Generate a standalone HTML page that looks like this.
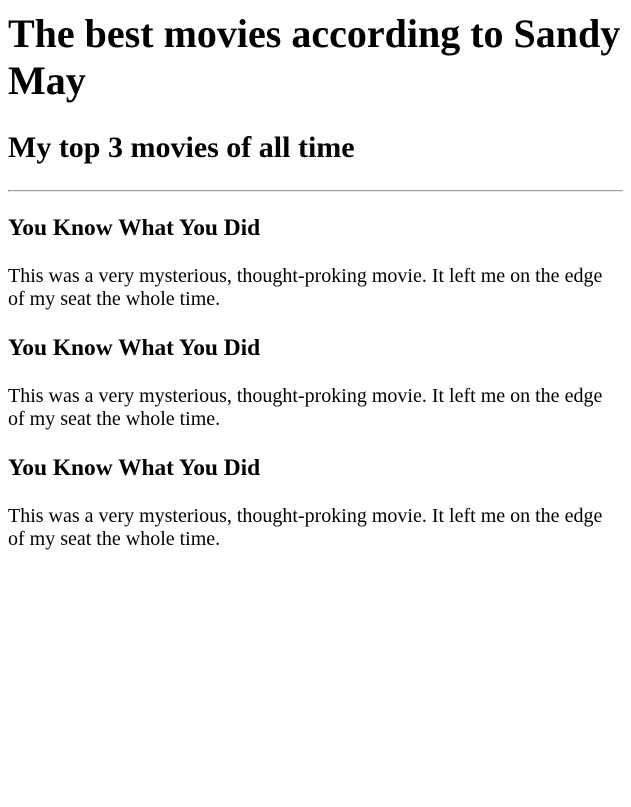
<!DOCTYPE html>
<html>
<head>
<meta charset="utf-8">
<style>
body { margin: 10px 8px 8px 8px; font-family: "Liberation Serif", serif; font-size: 20px; color: #000; background: #fff; }
h1 { margin-top: 0; }
</style>
</head>
<body>
<h1>The best movies according to Sandy May</h1>
<h2>My top 3 movies of all time</h2>
<hr>
<h3>You Know What You Did</h3>
<p>This was a very mysterious, thought-proking movie. It left me on the edge of my seat the whole time.</p>
<h3>You Know What You Did</h3>
<p>This was a very mysterious, thought-proking movie. It left me on the edge of my seat the whole time.</p>
<h3>You Know What You Did</h3>
<p>This was a very mysterious, thought-proking movie. It left me on the edge of my seat the whole time.</p>
</body>
</html>
